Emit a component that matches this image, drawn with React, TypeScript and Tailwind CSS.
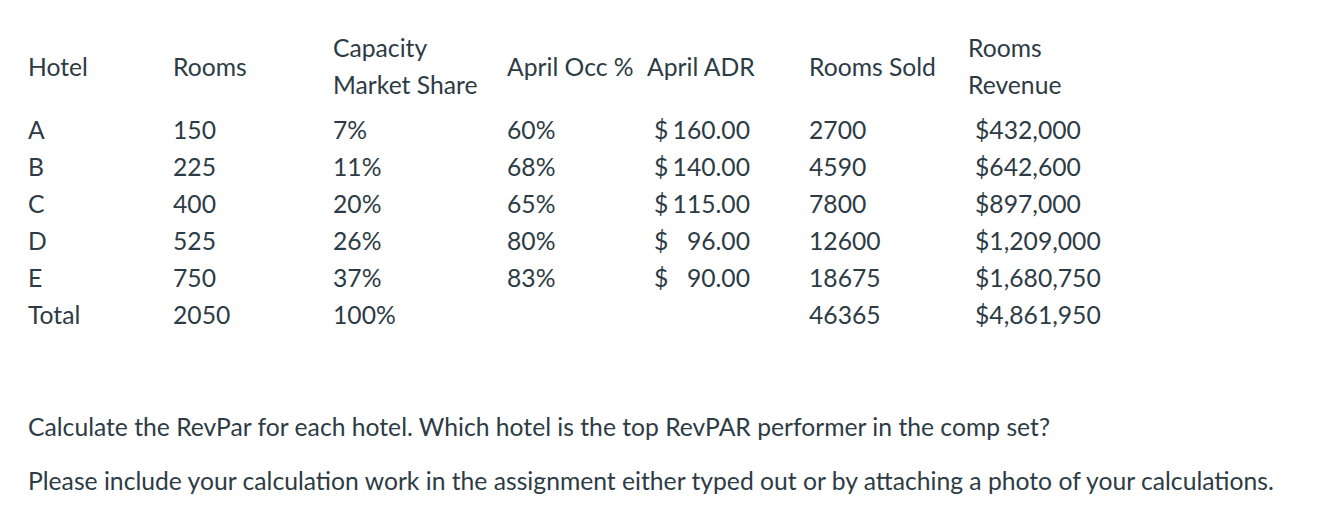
import React from "react";

// Hotel comp set table + assignment prompt

interface Row {
  hotel: string;
  rooms: string;
  share: string;
  occ?: string;
  adr?: string;
  sold: string;
  revenue: string;
}

const rows: Row[] = [
  { hotel: "A", rooms: "150", share: "7%", occ: "60%", adr: "160.00", sold: "2700", revenue: "$432,000" },
  { hotel: "B", rooms: "225", share: "11%", occ: "68%", adr: "140.00", sold: "4590", revenue: "$642,600" },
  { hotel: "C", rooms: "400", share: "20%", occ: "65%", adr: "115.00", sold: "7800", revenue: "$897,000" },
  { hotel: "D", rooms: "525", share: "26%", occ: "80%", adr: "96.00", sold: "12600", revenue: "$1,209,000" },
  { hotel: "E", rooms: "750", share: "37%", occ: "83%", adr: "90.00", sold: "18675", revenue: "$1,680,750" },
  { hotel: "Total", rooms: "2050", share: "100%", sold: "46365", revenue: "$4,861,950" },
];

const cols = "grid grid-cols-[145px_160px_174px_140px_162px_159px_200px] items-center";

export default function App() {
  return (
    <div
      className="w-[1320px] h-[522px] overflow-hidden bg-white text-[#2d3b45] text-[24.7px] leading-[37px] pl-7 pt-[29px] whitespace-nowrap"
      style={{ fontFamily: "Lato, 'Noto Sans', sans-serif" }}
    >
      {/* Header */}
      <div className={cols}>
        <div>Hotel</div>
        <div>Rooms</div>
        <div>
          <div>Capacity</div>
          <div>Market Share</div>
        </div>
        <div>April Occ %</div>
        <div>April ADR</div>
        <div>Rooms Sold</div>
        <div>
          <div>Rooms</div>
          <div>Revenue</div>
        </div>
      </div>

      {/* Body */}
      <div className="mt-[8px]">
        {rows.map((r) => (
          <div key={r.hotel} className={cols}>
            <div>{r.hotel}</div>
            <div>{r.rooms}</div>
            <div>{r.share}</div>
            <div>{r.occ ?? ""}</div>
            <div className="pl-[7px]">
              {r.adr ? (
                <div className="flex justify-between w-[96px]">
                  <span>$</span>
                  <span>{r.adr}</span>
                </div>
              ) : (
                <span>&nbsp;</span>
              )}
            </div>
            <div>{r.sold}</div>
            <div className="pl-[7px]">{r.revenue}</div>
          </div>
        ))}
      </div>

      <p className="mt-[75px]">Calculate the RevPar for each hotel. Which hotel is the top RevPAR performer in the comp set?</p>
      <p className="mt-[17px]">
        Please include your calculation work in the assignment either typed out or by attaching a photo of your calculations.
      </p>
    </div>
  );
}
